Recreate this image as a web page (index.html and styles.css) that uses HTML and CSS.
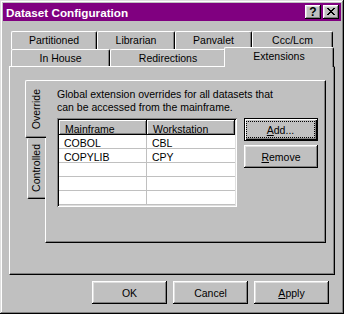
FILE: index.html
```html
<!DOCTYPE html>
<html lang="en">
  <head>
    <meta charset="UTF-8" />
    <meta name="viewport" content="width=device-width, initial-scale=1.0" />
    <title>Dataset Configuration</title>
    <link rel="stylesheet" href="styles.css">
  </head>

  <body>
    <div class="window">
      <div class="titlebar">
        <span class="title">Dataset Configuration</span>
        <button class="caption-btn help">?</button>
        <button class="caption-btn close">
          <svg width="8" height="7" viewBox="0 0 8 7">
            <path d="M0 0h2v1H0zM6 0h2v1H6zM1 1h2v1H1zM5 1h2v1H5zM2 2h4v1H2zM3 3h2v1H3zM2 4h4v1H2zM1 5h2v1H1zM5 5h2v1H5zM0 6h2v1H0zM6 6h2v1H6z" fill="#000" />
          </svg>
        </button>
      </div>

      <div class="dialog">
        <div class="tab-row">
          <div class="tab tab-partitioned">Partitioned</div>
          <div class="tab tab-librarian">Librarian</div>
          <div class="tab tab-panvalet">Panvalet</div>
          <div class="tab tab-ccc">Ccc/Lcm</div>
        </div>
        <div class="tab-row front">
          <div class="tab tab-inhouse">In House</div>
          <div class="tab tab-redirections">Redirections</div>
          <div class="tab tab-extensions selected">Extensions</div>
        </div>

        <div class="page">
          <div class="side-tabs">
            <div class="side-tab selected"><span>Override</span></div>
            <div class="side-tab"><span>Controlled</span></div>
          </div>

          <div class="side-page">
            <p class="note">
              Global extension overrides for all datasets that<br />can be
              accessed from the mainframe.
            </p>
            <div class="list-area">
              <div class="list">
                <div class="list-head">
                  <div class="col">Mainframe</div>
                  <div class="col">Workstation</div>
                </div>
                <div class="list-row">
                  <div class="cell">COBOL</div>
                  <div class="cell">CBL</div>
                </div>
                <div class="list-row">
                  <div class="cell">COPYLIB</div>
                  <div class="cell">CPY</div>
                </div>
                <div class="list-row">
                  <div class="cell"></div>
                  <div class="cell"></div>
                </div>
                <div class="list-row">
                  <div class="cell"></div>
                  <div class="cell"></div>
                </div>
                <div class="list-row">
                  <div class="cell"></div>
                  <div class="cell"></div>
                </div>
              </div>
              <div class="side-buttons">
                <button class="btn default">
                  <span class="focus"><u>A</u>dd...</span>
                </button>
                <button class="btn"><u>R</u>emove</button>
              </div>
            </div>
          </div>
        </div>

        <div class="actions">
          <button class="btn">OK</button>
          <button class="btn">Cancel</button>
          <button class="btn"><u>A</u>pply</button>
        </div>
      </div>
    </div>
  </body>
</html>
```

FILE: styles.css
```css
* {
  box-sizing: border-box;
}

body {
  margin: 0;
  background-color: #c0c0c0;
  font-family: "Liberation Sans", Arial, sans-serif;
  font-size: 10.5px;
  color: #000;
}

button {
  margin: 0;
  padding: 0;
  border: none;
  background-color: #c0c0c0;
  font: inherit;
  color: #000;
}

.window {
  width: 344px;
  height: 314px;
  padding: 3px;
  background-color: #c0c0c0;
  box-shadow: inset -1px -1px #000, inset 1px 1px #dfdfdf,
    inset -2px -2px #808080, inset 2px 2px #fff;
}

/* title bar */

.titlebar {
  display: flex;
  align-items: center;
  height: 18px;
  padding: 0 2px 0 3px;
  background-color: #800080;
}

.title {
  flex: 1;
  color: #fff;
  font-weight: bold;
  font-size: 11.7px;
}

.caption-btn {
  display: flex;
  align-items: center;
  justify-content: center;
  width: 16px;
  height: 14px;
  box-shadow: inset -1px -1px #000, inset 1px 1px #fff,
    inset -2px -2px #808080, inset 2px 2px #dfdfdf;
}

.caption-btn + .caption-btn {
  margin-left: 2px;
}

.help {
  font-weight: bold;
  font-size: 12px;
  line-height: 14px;
}

.close svg {
  display: block;
  margin-top: -1px;
}

/* tabs */

.dialog {
  padding: 10px 6px 0;
}

.tab-row {
  display: flex;
  height: 18px;
  padding-left: 2px;
}

.tab-row.front {
  height: 17px;
}

.tab {
  height: 18px;
  padding-top: 2px;
  line-height: 13px;
  text-align: center;
  background-color: #c0c0c0;
  border-top: 1px solid #fff;
  border-left: 1px solid #fff;
  border-right: 1px solid #000;
  border-radius: 2px 2px 0 0;
  box-shadow: inset -1px 0 #808080;
}

.front .tab {
  height: 17px;
}

.front .tab.selected {
  position: relative;
  z-index: 2;
  height: 20px;
  margin-top: -2px;
  margin-left: -2px;
}

.tab-partitioned { width: 86px; }
.tab-librarian { width: 78px; }
.tab-panvalet { width: 77px; }
.tab-ccc { width: 81px; }
.tab-inhouse { width: 99px; }
.tab-redirections { width: 116px; }
.tab-extensions { width: 110px; }

.page {
  position: relative;
  z-index: 1;
  display: flex;
  align-items: flex-start;
  height: 209px;
  padding: 13px 8px 0 15px;
  background-color: #c0c0c0;
  border-top: 1px solid #fff;
  border-left: 1px solid #fff;
  border-right: 1px solid #000;
  border-bottom: 1px solid #000;
  box-shadow: inset -1px -1px #808080;
}

/* side tabs */

.side-tabs {
  position: relative;
  z-index: 1;
  display: flex;
  flex-direction: column;
  width: 20px;
}

.side-tab {
  display: flex;
  align-items: center;
  justify-content: center;
  width: 18px;
  height: 61px;
  margin-left: 2px;
  background-color: #c0c0c0;
  border-left: 1px solid #fff;
  border-bottom: 1px solid #000;
  border-radius: 2px 0 0 2px;
  box-shadow: inset 0 -1px #808080;
}

.side-tab.selected {
  width: 21px;
  height: 58px;
  margin-left: 0;
  border-top: 1px solid #fff;
}

.side-tab span {
  writing-mode: vertical-rl;
  transform: rotate(180deg);
  line-height: 13px;
}

.side-page {
  width: 281px;
  height: 163px;
  padding: 7px 0 0 11px;
  border-top: 1px solid #fff;
  border-left: 1px solid #fff;
  border-right: 1px solid #000;
  border-bottom: 1px solid #000;
  box-shadow: inset -1px -1px #808080;
}

.note {
  margin: 0;
  line-height: 13px;
}

/* list view */

.list-area {
  display: flex;
  gap: 7px;
  margin-top: 4px;
}

.list {
  width: 180px;
  height: 89px;
  padding: 2px;
  background-color: #fff;
  box-shadow: inset 1px 1px #808080, inset -1px -1px #fff,
    inset 2px 2px #000, inset -2px -2px #dfdfdf;
}

.list-head,
.list-row {
  display: grid;
  grid-template-columns: 88px 88px;
}

.col {
  height: 15px;
  padding: 3px 0 0 6px;
  line-height: 12px;
  background-color: #c0c0c0;
  box-shadow: inset -1px -1px #000, inset 1px 1px #fff,
    inset -2px -2px #808080;
}

.list-row {
  height: 14px;
  border-bottom: 1px solid #c0c0c0;
}

.cell {
  padding: 2px 0 0 5px;
  line-height: 13px;
  white-space: nowrap;
}

.cell:first-child {
  border-right: 1px solid #c0c0c0;
}

/* buttons */

.btn {
  width: 74px;
  height: 23px;
  text-align: center;
  box-shadow: inset -1px -1px #000, inset 1px 1px #fff,
    inset -2px -2px #808080, inset 2px 2px #dfdfdf;
}

.btn.default {
  padding: 3px 3px 3px 2px;
  box-shadow: inset 0 0 0 1px #000, inset 2px 2px #fff,
    inset -2px -2px #000, inset -3px -3px #808080;
}

.focus {
  display: flex;
  align-items: center;
  justify-content: center;
  height: 100%;
  border: 1px dotted #000;
}

.side-buttons {
  display: flex;
  flex-direction: column;
  gap: 4px;
}

.actions {
  display: flex;
  justify-content: flex-end;
  gap: 6px;
  padding: 6px 6px 0 0;
}

.actions .btn {
  width: 75px;
}
```
